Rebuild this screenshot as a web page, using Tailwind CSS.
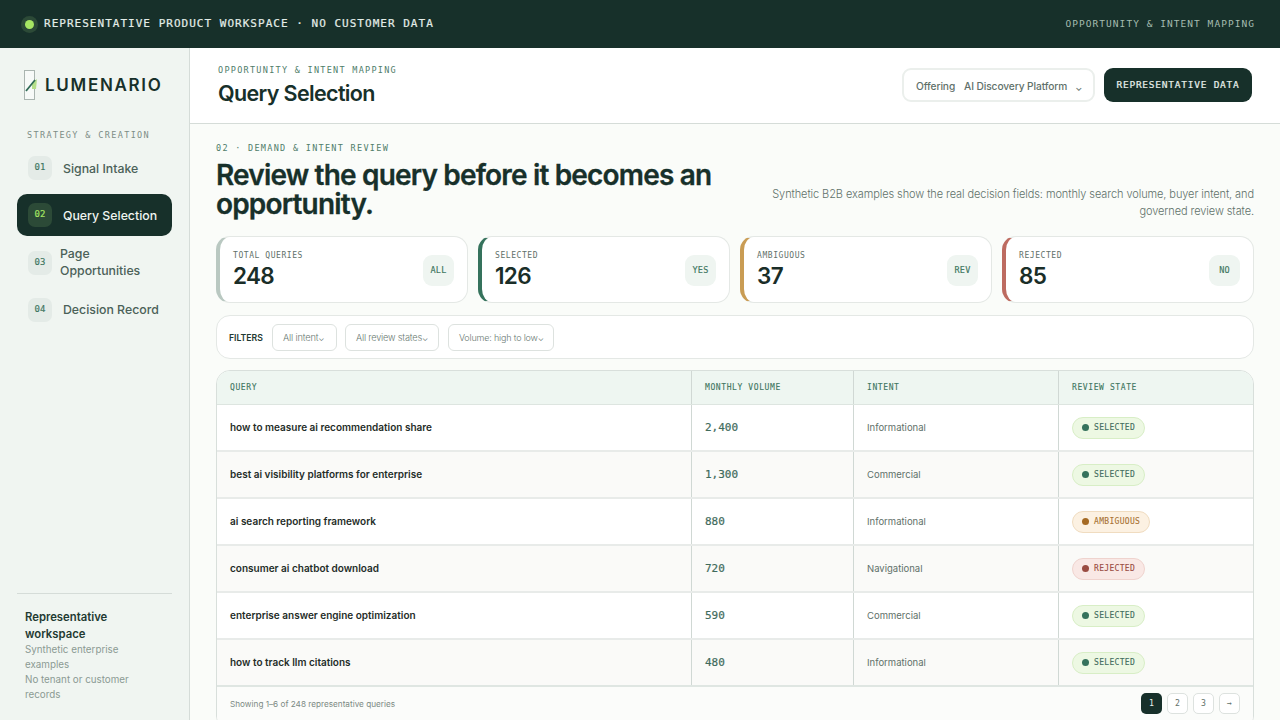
<!DOCTYPE html>
<html lang="en">
<head>
<meta charset="utf-8">
<script src="https://cdn.jsdelivr.net/npm/@tailwindcss/browser@4"></script>
<title>Query Selection</title>
</head>
<body class="w-[1280px] h-[720px] overflow-hidden bg-[#fafcf9] text-[#17302a] font-['Inter','Noto_Sans',sans-serif]">
<header class="h-12 bg-[#17302a] flex items-center justify-between pl-[21px] pr-[25px]">
  <div class="flex items-center gap-[6px]">
    <span class="w-[17px] h-[17px] rounded-full bg-[#2c4a37] flex items-center justify-center"><span class="w-[9px] h-[9px] rounded-full bg-[#a6e663]"></span></span>
    <span class="font-['DejaVu_Sans_Mono',monospace] text-[11px] [-webkit-text-stroke:0.2px] tracking-[1.02px] text-[#e3ede8]">REPRESENTATIVE PRODUCT WORKSPACE · NO CUSTOMER DATA</span>
  </div>
  <span class="font-['DejaVu_Sans_Mono',monospace] text-[9.5px] tracking-[1.05px] text-[#a5bcb0]">OPPORTUNITY &amp; INTENT MAPPING</span>
</header>
<div class="flex h-[672px]">
  <aside class="w-[190px] shrink-0 bg-[#f0f5f1] border-r border-[#d5dcd8] flex flex-col px-[17px]">
    <div class="flex items-center gap-[7px] pl-[7px] h-[74px]">
      <svg width="14" height="31" viewBox="0 0 14 31" class="shrink-0"><rect x="0.5" y="0.5" width="10" height="29" fill="#f7faf8" stroke="#aab5b0"/><path d="M8 13 L13 9 L12 19 L8 19 Z" fill="#b5e08a"/><path d="M2 21 L11 10" stroke="#2f6b55" stroke-width="1.8" fill="none"/></svg>
      <span class="text-[17px] font-semibold tracking-[0.1em] leading-none text-[#17302a]">LUMENARIO</span>
    </div>
    <div class="pl-[10px] mt-[7px] font-['DejaVu_Sans_Mono',monospace] text-[8.5px] tracking-[0.16em] text-[#7d8d86] leading-[12px]">STRATEGY &amp; CREATION</div>
    <nav class="mt-[6px] flex flex-col gap-[5px]">
      <a class="h-[42px] rounded-[10px] flex items-center gap-[11px] px-[11px] text-[#4b6158] text-[12.3px] font-medium"><span class="w-6 h-6 shrink-0 rounded-[7px] bg-[#e4ebe7] flex items-center justify-center font-['DejaVu_Sans_Mono',monospace] text-[9px] [-webkit-text-stroke:0.15px] text-[#3d7560]">01</span><span class="pt-[2px]">Signal Intake</span></a>
      <a class="h-[42px] rounded-[10px] flex items-center gap-[11px] px-[11px] bg-[#17302a] text-[#f0f5f1] text-[12.3px] font-medium"><span class="w-6 h-6 shrink-0 rounded-[7px] bg-[#2c4a37] flex items-center justify-center font-['DejaVu_Sans_Mono',monospace] text-[9px] [-webkit-text-stroke:0.15px] text-[#a6e663]">02</span><span class="pt-[2px]">Query Selection</span></a>
      <a class="h-[43px] rounded-[10px] flex items-center gap-[8px] px-[11px] text-[#4b6158] text-[12.3px] font-medium leading-[16.5px]"><span class="w-6 h-6 shrink-0 rounded-[7px] bg-[#e4ebe7] flex items-center justify-center font-['DejaVu_Sans_Mono',monospace] text-[9px] [-webkit-text-stroke:0.15px] text-[#3d7560]">03</span><span class="w-[90px]">Page Opportunities</span></a>
      <a class="h-[42px] rounded-[10px] flex items-center gap-[11px] px-[11px] text-[#4b6158] text-[12.3px] font-medium"><span class="w-6 h-6 shrink-0 rounded-[7px] bg-[#e4ebe7] flex items-center justify-center font-['DejaVu_Sans_Mono',monospace] text-[9px] [-webkit-text-stroke:0.15px] text-[#3d7560]">04</span>Decision Record</a>
    </nav>
    <div class="mt-auto border-t border-[#d5dcd8] pt-[15px] px-2 h-[127px]">
      <div class="text-[11.3px] font-semibold leading-[16.5px] text-[#1f3a32]">Representative workspace</div>
      <div class="text-[9.8px] leading-[15px] text-[#8b9a93]">Synthetic enterprise examples<br>No tenant or customer records</div>
    </div>
  </aside>
  <main class="flex-1 min-w-0 flex flex-col overflow-hidden">
    <div class="h-[76px] shrink-0 bg-white border-b border-[#d5dcd8] flex items-center justify-between pl-[28px] pr-[28px]">
      <div>
        <div class="font-['DejaVu_Sans_Mono',monospace] text-[8.5px] tracking-[0.15em] text-[#4f7d6a] leading-[12px] mb-[3px]">OPPORTUNITY &amp; INTENT MAPPING</div>
        <div class="text-[21.5px] font-semibold tracking-[-0.03em] leading-[28px] text-[#17302a] mb-[1px]">Query Selection</div>
      </div>
      <div class="flex items-center gap-[9px] mb-[1px]">
        <div class="h-[34px] w-[193px] rounded-[9px] bg-white border-2 border-[#ebefec] flex items-center pl-[12px] pt-[3px] text-[10.2px] font-medium text-[#5f716a] tracking-[-0.01em]"><span>Offering</span><span class="ml-[9px]">AI Discovery Platform</span><span class="ml-[8px] text-[9px] leading-none mt-[2px]">⌄</span></div>
        <div class="h-[34px] w-[148px] rounded-[9px] bg-[#17302a] flex items-center justify-center font-['DejaVu_Sans_Mono',monospace] text-[9.5px] [-webkit-text-stroke:0.2px] tracking-[0.08em] text-[#e8f1ec]">REPRESENTATIVE DATA</div>
      </div>
    </div>
    <div class="flex-1 pl-[26px] pr-[26px] pt-[18px]">
      <div class="flex justify-between h-[77px]">
        <div class="self-start">
          <div class="font-['DejaVu_Sans_Mono',monospace] text-[8.5px] tracking-[0.152em] text-[#4f7d6a] leading-[12px]">02 · DEMAND &amp; INTENT REVIEW</div>
          <h1 class="mt-[7px] w-[520px] text-[28px] font-semibold leading-[28.5px] tracking-[-0.0295em] text-[#17302a] [-webkit-text-stroke:0.3px]">Review the query before it becomes an opportunity.</h1>
        </div>
        <p class="self-end w-[490px] text-right text-[11px] font-light tracking-[-0.008em] leading-[17px] text-[#5f716a] mb-[-1px]">Synthetic B2B examples show the real decision fields: monthly search volume, buyer intent, and governed review state.</p>
      </div>
      <div class="mt-[17px] grid grid-cols-4 gap-[10px]">
        <div class="h-[67px] bg-white rounded-[14px] border border-[#e4e8e5] border-l-4 border-l-[#b9c8c1] flex items-center justify-between pl-[13px] pr-[13px] pt-[2px]">
          <div><div class="font-['DejaVu_Sans_Mono',monospace] text-[8px] tracking-[0.07em] text-[#5f716a] leading-[11px]">TOTAL QUERIES</div><div class="text-[22.5px] font-semibold tracking-[-0.03em] leading-[30px] text-[#1a2e28]">248</div></div>
          <span class="w-[31px] h-[31px] rounded-[9px] bg-[#eff5f1] flex items-center justify-center font-['DejaVu_Sans_Mono',monospace] text-[8.5px] [-webkit-text-stroke:0.15px] text-[#3d7560] tracking-[0.03em]">ALL</span>
        </div>
        <div class="h-[67px] bg-white rounded-[14px] border border-[#e4e8e5] border-l-4 border-l-[#35725c] flex items-center justify-between pl-[13px] pr-[13px] pt-[2px]">
          <div><div class="font-['DejaVu_Sans_Mono',monospace] text-[8px] tracking-[0.07em] text-[#5f716a] leading-[11px]">SELECTED</div><div class="text-[22.5px] font-semibold tracking-[-0.03em] leading-[30px] text-[#1a2e28]">126</div></div>
          <span class="w-[31px] h-[31px] rounded-[9px] bg-[#eff5f1] flex items-center justify-center font-['DejaVu_Sans_Mono',monospace] text-[8.5px] [-webkit-text-stroke:0.15px] text-[#3d7560] tracking-[0.03em]">YES</span>
        </div>
        <div class="h-[67px] bg-white rounded-[14px] border border-[#e4e8e5] border-l-4 border-l-[#c99c54] flex items-center justify-between pl-[13px] pr-[13px] pt-[2px]">
          <div><div class="font-['DejaVu_Sans_Mono',monospace] text-[8px] tracking-[0.07em] text-[#5f716a] leading-[11px]">AMBIGUOUS</div><div class="text-[22.5px] font-semibold tracking-[-0.03em] leading-[30px] text-[#1a2e28]">37</div></div>
          <span class="w-[31px] h-[31px] rounded-[9px] bg-[#eff5f1] flex items-center justify-center font-['DejaVu_Sans_Mono',monospace] text-[8.5px] [-webkit-text-stroke:0.15px] text-[#3d7560] tracking-[0.03em]">REV</span>
        </div>
        <div class="h-[67px] bg-white rounded-[14px] border border-[#e4e8e5] border-l-4 border-l-[#bd6b60] flex items-center justify-between pl-[13px] pr-[13px] pt-[2px]">
          <div><div class="font-['DejaVu_Sans_Mono',monospace] text-[8px] tracking-[0.07em] text-[#5f716a] leading-[11px]">REJECTED</div><div class="text-[22.5px] font-semibold tracking-[-0.03em] leading-[30px] text-[#1a2e28]">85</div></div>
          <span class="w-[31px] h-[31px] rounded-[9px] bg-[#eff5f1] flex items-center justify-center font-['DejaVu_Sans_Mono',monospace] text-[8.5px] [-webkit-text-stroke:0.15px] text-[#3d7560] tracking-[0.03em]">NO</span>
        </div>
      </div>
      <div class="mt-[12px] h-[44px] bg-white rounded-[14px] border border-[#e4e8e5] flex items-center pl-[12px] gap-[8px]">
        <span class="text-[8.7px] font-semibold text-[#1f3a32] mr-[1px] pt-[3px]">FILTERS</span>
        <div class="h-[27px] w-[65px] rounded-[6px] border border-[#dde2df] flex items-center pl-[10px] pt-[1px] text-[9.3px] font-light text-[#6b7a74] tracking-[-0.02em]">All intent<span class="text-[8px] leading-none">⌄</span></div>
        <div class="h-[27px] w-[94px] rounded-[6px] border border-[#dde2df] flex items-center pl-[10px] pt-[1px] text-[9.2px] font-light text-[#6b7a74] tracking-[-0.02em]">All review states<span class="text-[8px] leading-none">⌄</span></div>
        <div class="h-[27px] w-[106px] ml-[1px] rounded-[6px] border border-[#dde2df] flex items-center pl-[10px] pt-[1px] text-[9px] font-light text-[#6b7a74] tracking-[-0.02em]">Volume: high to low<span class="text-[8px] leading-none">⌄</span></div>
      </div>
      <div class="mt-[11px] rounded-[14px] border border-[#d8dfdb] bg-white overflow-hidden h-[360px]">
        <div class="grid grid-cols-[474px_162px_205px_1fr] h-[34px] bg-[#eef6f1] border-b border-[#dde5e0] font-['DejaVu_Sans_Mono',monospace] text-[8px] tracking-[0.075em] [-webkit-text-stroke:0.1px] text-[#3d7560] items-stretch">
          <div class="flex items-center pl-[13px]">QUERY</div>
          <div class="flex items-center pl-[13px] border-l border-[#d0d8d4]">MONTHLY VOLUME</div>
          <div class="flex items-center pl-[13px] border-l border-[#d0d8d4]">INTENT</div>
          <div class="flex items-center pl-[13px] border-l border-[#d0d8d4]">REVIEW STATE</div>
        </div>
        <div class="grid grid-cols-[474px_162px_205px_1fr] h-[47px] bg-white border-b-2 border-[#e8ebe9]">
          <div class="flex items-center pl-[13px] text-[10px] font-semibold text-[#1f2d28]">how to measure ai recommendation share</div>
          <div class="flex items-center pl-[13px] pt-[1px] border-l border-[#d0d8d4] font-['DejaVu_Sans_Mono',monospace] text-[11px] [-webkit-text-stroke:0.2px] text-[#3f6b5c]">2,400</div>
          <div class="flex items-center pl-[13px] pt-[1px] border-l border-[#d0d8d4] text-[9.5px] text-[#5f716a]">Informational</div>
          <div class="flex items-center pl-[13px] border-l border-[#d0d8d4]"><span class="h-[22px] w-[73px] rounded-full bg-[#edf8e3] border border-[#d8eec6] flex items-center pl-[9px] gap-[5px] font-['DejaVu_Sans_Mono',monospace] text-[8px] tracking-[0.04em] [-webkit-text-stroke:0.1px] text-[#3f6b5c]"><i class="w-[7px] h-[7px] rounded-full bg-[#35725c]"></i>SELECTED</span></div>
        </div>
        <div class="grid grid-cols-[474px_162px_205px_1fr] h-[47px] bg-[#fafaf8] border-b-2 border-[#e8ebe9]">
          <div class="flex items-center pl-[13px] text-[10px] font-semibold text-[#1f2d28]">best ai visibility platforms for enterprise</div>
          <div class="flex items-center pl-[13px] pt-[1px] border-l border-[#d0d8d4] font-['DejaVu_Sans_Mono',monospace] text-[11px] [-webkit-text-stroke:0.2px] text-[#3f6b5c]">1,300</div>
          <div class="flex items-center pl-[13px] pt-[1px] border-l border-[#d0d8d4] text-[9.5px] text-[#5f716a]">Commercial</div>
          <div class="flex items-center pl-[13px] border-l border-[#d0d8d4]"><span class="h-[22px] w-[73px] rounded-full bg-[#edf8e3] border border-[#d8eec6] flex items-center pl-[9px] gap-[5px] font-['DejaVu_Sans_Mono',monospace] text-[8px] tracking-[0.04em] [-webkit-text-stroke:0.1px] text-[#3f6b5c]"><i class="w-[7px] h-[7px] rounded-full bg-[#35725c]"></i>SELECTED</span></div>
        </div>
        <div class="grid grid-cols-[474px_162px_205px_1fr] h-[47px] bg-white border-b-2 border-[#e8ebe9]">
          <div class="flex items-center pl-[13px] text-[10px] font-semibold text-[#1f2d28]">ai search reporting framework</div>
          <div class="flex items-center pl-[13px] pt-[1px] border-l border-[#d0d8d4] font-['DejaVu_Sans_Mono',monospace] text-[11px] [-webkit-text-stroke:0.2px] text-[#3f6b5c]">880</div>
          <div class="flex items-center pl-[13px] pt-[1px] border-l border-[#d0d8d4] text-[9.5px] text-[#5f716a]">Informational</div>
          <div class="flex items-center pl-[13px] border-l border-[#d0d8d4]"><span class="h-[22px] w-[78px] rounded-full bg-[#fcf1e2] border border-[#f0dcc0] flex items-center pl-[9px] gap-[5px] font-['DejaVu_Sans_Mono',monospace] text-[8px] tracking-[0.04em] [-webkit-text-stroke:0.1px] text-[#a87232]"><i class="w-[7px] h-[7px] rounded-full bg-[#a56a24]"></i>AMBIGUOUS</span></div>
        </div>
        <div class="grid grid-cols-[474px_162px_205px_1fr] h-[47px] bg-[#fafaf8] border-b-2 border-[#e8ebe9]">
          <div class="flex items-center pl-[13px] text-[10px] font-semibold text-[#1f2d28]">consumer ai chatbot download</div>
          <div class="flex items-center pl-[13px] pt-[1px] border-l border-[#d0d8d4] font-['DejaVu_Sans_Mono',monospace] text-[11px] [-webkit-text-stroke:0.2px] text-[#3f6b5c]">720</div>
          <div class="flex items-center pl-[13px] pt-[1px] border-l border-[#d0d8d4] text-[9.5px] text-[#5f716a]">Navigational</div>
          <div class="flex items-center pl-[13px] border-l border-[#d0d8d4]"><span class="h-[22px] w-[73px] rounded-full bg-[#f9e8e5] border border-[#efd3ce] flex items-center pl-[9px] gap-[5px] font-['DejaVu_Sans_Mono',monospace] text-[8px] tracking-[0.04em] [-webkit-text-stroke:0.1px] text-[#9a4b41]"><i class="w-[7px] h-[7px] rounded-full bg-[#9a4b41]"></i>REJECTED</span></div>
        </div>
        <div class="grid grid-cols-[474px_162px_205px_1fr] h-[47px] bg-white border-b-2 border-[#e8ebe9]">
          <div class="flex items-center pl-[13px] text-[10px] font-semibold text-[#1f2d28]">enterprise answer engine optimization</div>
          <div class="flex items-center pl-[13px] pt-[1px] border-l border-[#d0d8d4] font-['DejaVu_Sans_Mono',monospace] text-[11px] [-webkit-text-stroke:0.2px] text-[#3f6b5c]">590</div>
          <div class="flex items-center pl-[13px] pt-[1px] border-l border-[#d0d8d4] text-[9.5px] text-[#5f716a]">Commercial</div>
          <div class="flex items-center pl-[13px] border-l border-[#d0d8d4]"><span class="h-[22px] w-[73px] rounded-full bg-[#edf8e3] border border-[#d8eec6] flex items-center pl-[9px] gap-[5px] font-['DejaVu_Sans_Mono',monospace] text-[8px] tracking-[0.04em] [-webkit-text-stroke:0.1px] text-[#3f6b5c]"><i class="w-[7px] h-[7px] rounded-full bg-[#35725c]"></i>SELECTED</span></div>
        </div>
        <div class="grid grid-cols-[474px_162px_205px_1fr] h-[47px] bg-[#fafaf8] border-b-2 border-[#dfe6e2]">
          <div class="flex items-center pl-[13px] text-[10px] font-semibold text-[#1f2d28]">how to track llm citations</div>
          <div class="flex items-center pl-[13px] pt-[1px] border-l border-[#d0d8d4] font-['DejaVu_Sans_Mono',monospace] text-[11px] [-webkit-text-stroke:0.2px] text-[#3f6b5c]">480</div>
          <div class="flex items-center pl-[13px] pt-[1px] border-l border-[#d0d8d4] text-[9.5px] text-[#5f716a]">Informational</div>
          <div class="flex items-center pl-[13px] border-l border-[#d0d8d4]"><span class="h-[22px] w-[73px] rounded-full bg-[#edf8e3] border border-[#d8eec6] flex items-center pl-[9px] gap-[5px] font-['DejaVu_Sans_Mono',monospace] text-[8px] tracking-[0.04em] [-webkit-text-stroke:0.1px] text-[#3f6b5c]"><i class="w-[7px] h-[7px] rounded-full bg-[#35725c]"></i>SELECTED</span></div>
        </div>
        <div class="h-[33px] flex items-center justify-between pl-[13px] pr-[13px] bg-[#fbfcfa] text-[8.2px] text-[#7b8a84]">
          <span class="pt-[1px]">Showing 1–6 of 248 representative queries</span>
          <div class="flex gap-[5px] font-['DejaVu_Sans_Mono',monospace]">
            <span class="w-[21px] h-[21px] rounded-[5px] bg-[#17302a] text-[#e8f1ec] flex items-center justify-center">1</span>
            <span class="w-[21px] h-[21px] rounded-[5px] bg-white border border-[#dde2df] text-[#5f716a] flex items-center justify-center">2</span>
            <span class="w-[21px] h-[21px] rounded-[5px] bg-white border border-[#dde2df] text-[#5f716a] flex items-center justify-center">3</span>
            <span class="w-[21px] h-[21px] rounded-[5px] bg-white border border-[#dde2df] text-[#5f716a] flex items-center justify-center">→</span>
          </div>
        </div>
      </div>
    </div>
  </main>
</div>
</body>
</html>
